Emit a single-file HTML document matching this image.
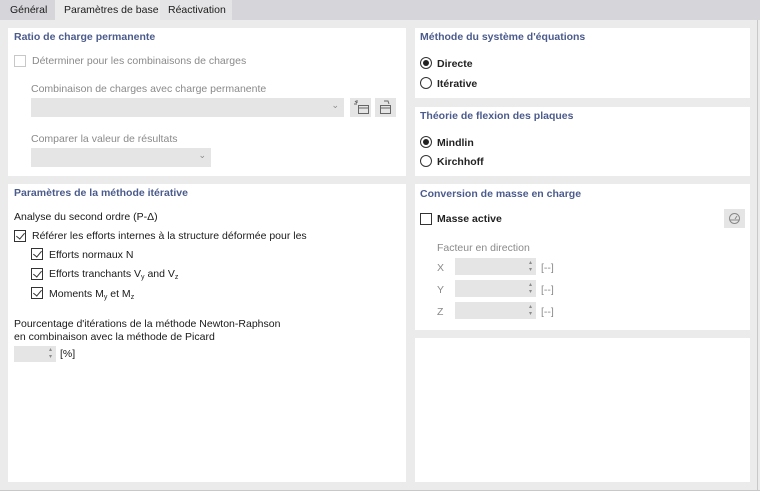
<!DOCTYPE html>
<html><head><meta charset="utf-8"><style>
*{box-sizing:border-box;margin:0;padding:0}
body{width:760px;height:491px;background:#ebebeb;font-family:"Liberation Sans",sans-serif;font-size:10.5px;color:#1a1a1a;position:relative;overflow:hidden}
.tabs{position:absolute;left:0;top:0;width:760px;height:20px;background:#d5d5da}
.tab{position:absolute;top:0;height:20px;line-height:20px;font-size:10.5px;color:#1a1a1a;white-space:nowrap}
.p{position:absolute;background:#fff}
.t{position:absolute;color:#4b5b8c;font-weight:bold;font-size:10.5px;white-space:nowrap}
.a{position:absolute;white-space:nowrap}
.g{color:#8a8a8a}
.cb{position:absolute;width:12px;height:12px;border:1px solid #333;background:#fff}
.cb.d{border-color:#c8c8c8}
.cb.c::after{content:"";position:absolute;left:3px;top:0px;width:4px;height:7px;border:solid #333;border-width:0 1.3px 1.3px 0;transform:rotate(40deg)}
.rb{position:absolute;width:12px;height:12px;border:1px solid #333;border-radius:50%;background:#fff}
.rb.s::after{content:"";position:absolute;left:2px;top:2px;width:6px;height:6px;border-radius:50%;background:#222}
.f{position:absolute;background:#e5e5e5}
.small{font-size:7px;position:relative;top:2px;line-height:0}
</style></head><body>
<div class="tabs">
<div class="tab" style="left:10px">Général</div>
<div class="tab" style="left:55px;width:105px;background:#ebebeb;padding-left:9px">Paramètres de base</div>
<div class="tab" style="left:160px;width:72px;background:#e4e4e6;padding-left:8px">Réactivation</div>
</div>
<div style="position:absolute;right:2px;top:20px;width:1px;height:471px;background:#c8c8c8"></div>
<div style="position:absolute;left:0;bottom:0;width:760px;height:1px;background:#c8c8c8"></div>

<div class="p" style="left:8px;top:28px;width:398px;height:148px"></div>
<div class="t" style="left:14px;top:31px">Ratio de charge permanente</div>
<div class="cb d" style="left:14px;top:55px"></div>
<div class="a g" style="left:32px;top:55px">Déterminer pour les combinaisons de charges</div>
<div class="a g" style="left:31px;top:83px">Combinaison de charges avec charge permanente</div>
<div class="f" style="left:31px;top:98px;width:313px;height:19px"><span class="a g" style="right:5px;top:2px;font-size:9px">&#8964;</span></div>
<div class="f" style="left:350px;top:98px;width:21px;height:19px"></div>
<div class="f" style="left:375px;top:98px;width:21px;height:19px"></div>
<svg class="a" style="left:352px;top:99px" width="40" height="17" fill="none" stroke="#666" stroke-width="1"><rect x="6.5" y="6.5" width="10" height="8"/><line x1="6" y1="9" x2="17" y2="9"/><path d="M3 2l2 2M5 1v3M2 5h3"/><rect x="28.5" y="6.5" width="10" height="8"/><line x1="28" y1="9" x2="39" y2="9"/><path d="M32 2h4l1 3"/></svg>
<div class="a g" style="left:31px;top:133px">Comparer la valeur de résultats</div>
<div class="f" style="left:31px;top:148px;width:180px;height:19px"><span class="a g" style="right:5px;top:2px;font-size:9px">&#8964;</span></div>

<div class="p" style="left:8px;top:184px;width:398px;height:298px"></div>
<div class="t" style="left:14px;top:187px">Paramètres de la méthode itérative</div>
<div class="a" style="left:14px;top:211px">Analyse du second ordre (P-Δ)</div>
<div class="cb c" style="left:14px;top:230px"></div>
<div class="a" style="left:32px;top:230px">Référer les efforts internes à la structure déformée pour les</div>
<div class="cb c" style="left:31px;top:248px"></div>
<div class="a" style="left:49px;top:249px">Efforts normaux N</div>
<div class="cb c" style="left:31px;top:268px"></div>
<div class="a" style="left:49px;top:268px">Efforts tranchants V<span class="small">y</span> and V<span class="small">z</span></div>
<div class="cb c" style="left:31px;top:287px"></div>
<div class="a" style="left:49px;top:288px">Moments M<span class="small">y</span> et M<span class="small">z</span></div>
<div class="a" style="left:14px;top:318px">Pourcentage d'itérations de la méthode Newton-Raphson</div>
<div class="a" style="left:14px;top:331px">en combinaison avec la méthode de Picard</div>
<div class="f" style="left:14px;top:346px;width:42px;height:16px"><span class="a g" style="right:4px;top:1px;font-size:6px;line-height:7px">▴<br>▾</span></div>
<div class="a" style="left:60px;top:348px">[%]</div>

<div class="p" style="left:415px;top:28px;width:335px;height:70px"></div>
<div class="t" style="left:420px;top:31px">Méthode du système d'équations</div>
<div class="rb s" style="left:420px;top:57px"></div>
<div class="a" style="left:437px;top:58px;font-weight:bold;color:#222">Directe</div>
<div class="rb" style="left:420px;top:77px"></div>
<div class="a" style="left:437px;top:78px;font-weight:bold;color:#222">Itérative</div>

<div class="p" style="left:415px;top:107px;width:335px;height:69px"></div>
<div class="t" style="left:420px;top:110px">Théorie de flexion des plaques</div>
<div class="rb s" style="left:420px;top:136px"></div>
<div class="a" style="left:437px;top:137px;font-weight:bold;color:#222">Mindlin</div>
<div class="rb" style="left:420px;top:155px"></div>
<div class="a" style="left:437px;top:156px;font-weight:bold;color:#222">Kirchhoff</div>

<div class="p" style="left:415px;top:184px;width:335px;height:146px"></div>
<div class="t" style="left:420px;top:188px">Conversion de masse en charge</div>
<div class="cb" style="left:420px;top:213px"></div>
<div class="a" style="left:437px;top:213px;font-weight:bold;color:#222">Masse active</div>
<div class="f" style="left:724px;top:209px;width:21px;height:19px"></div>
<svg class="a" style="left:727px;top:211px" width="15" height="15" fill="none" stroke="#888"><circle cx="7.5" cy="7.5" r="5"/><path d="M3 9h9M8 8l2-3"/></svg>
<div class="a g" style="left:437px;top:242px">Facteur en direction</div>
<div class="a g" style="left:437px;top:262px">X</div>
<div class="a g" style="left:437px;top:284px">Y</div>
<div class="a g" style="left:437px;top:306px">Z</div>
<div class="f" style="left:455px;top:258px;width:81px;height:17px"><span class="a g" style="right:4px;top:2px;font-size:6px;line-height:7px">▴<br>▾</span></div>
<div class="f" style="left:455px;top:280px;width:81px;height:17px"><span class="a g" style="right:4px;top:2px;font-size:6px;line-height:7px">▴<br>▾</span></div>
<div class="f" style="left:455px;top:302px;width:81px;height:17px"><span class="a g" style="right:4px;top:2px;font-size:6px;line-height:7px">▴<br>▾</span></div>
<div class="a g" style="left:541px;top:262px">[--]</div>
<div class="a g" style="left:541px;top:284px">[--]</div>
<div class="a g" style="left:541px;top:306px">[--]</div>

<div class="p" style="left:415px;top:338px;width:335px;height:144px"></div>
</body></html>
